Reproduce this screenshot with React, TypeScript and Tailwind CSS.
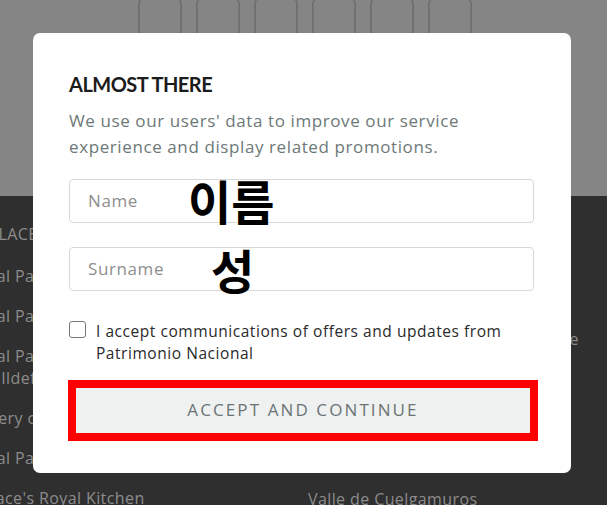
const BODY = "font-['Open_Sans',sans-serif]"

const leftLinks = [
  'Royal Palace of Madrid',
  'Royal Palace of Aranjuez',
]

function Page() {
  return (
    <div className="min-h-[505px] w-[607px] overflow-hidden bg-[#2f2f2f]">
      <div className="h-[196px] bg-[#858585] flex justify-center gap-[14px] pl-[2px]">
        {[0, 1, 2, 3, 4, 5].map(i => (
          <div key={i} className="w-[44px] h-[44px] -mt-[4px] rounded-[8px] border-2 border-[#717171]" />
        ))}
      </div>
      <div className={`flex text-[16px] tracking-[0.4px] text-[#8c8c8c] ${BODY}`}>
        <div className="-ml-[32px] w-[304px] shrink-0 flex flex-col pt-[27px]">
          <div className="tracking-wide leading-[22px] pl-[10px]">PALACES</div>
          <div className="flex flex-col gap-[18px] mt-[20px] leading-[22px]">
            {leftLinks.map(l => (
              <div key={l}>{l}</div>
            ))}
            <div>
              Royal Palace of La Granja de
              <br />
              San Ildefonso
            </div>
            <div>Gallery of Royal Collections</div>
            <div>Royal Palace of El Pardo</div>
            <div className="ml-[4px]">Palace's Royal Kitchen</div>
          </div>
        </div>
        <div className="ml-[36px] flex flex-col pt-[132px] leading-[22px]">
          <div className="whitespace-nowrap tracking-normal">Monastery of San Jerónimo de Yuste</div>
          <div className="mt-[138px] whitespace-nowrap">Valle de Cuelgamuros</div>
        </div>
      </div>
    </div>
  )
}

function Modal() {
  return (
    <div className="fixed inset-0 flex items-center justify-center pr-[3px]">
      <div className={`w-[538px] h-[440px] bg-white rounded-[7px] pl-[36px] pr-[37px] pt-[38px] ${BODY}`}>
        <h2 className="text-[20px] font-bold text-[#1c1c1c] leading-[28px] tracking-[-0.5px] -mt-[1px] font-['Lato',sans-serif]">
          ALMOST THERE
        </h2>
        <p className="mt-[10px] text-[17px] tracking-[0.6px] leading-[26px] text-[#6d7878]">
          We use our users' data to improve our service
          <br />
          experience and display related promotions.
        </p>
        <div className="relative mt-[19px]">
          <input
            placeholder="Name"
            className="w-full h-[44px] border border-[#d8d8d8] rounded-[4px] px-[18px] text-[17px] tracking-[0.6px] placeholder:text-[#8e8e8e] outline-none"
          />
          <span className="absolute left-[119px] top-[-6px] text-[47px] leading-[54px] font-bold text-black font-['Noto_Sans_CJK_KR',sans-serif] pointer-events-none">
            이름
          </span>
        </div>
        <div className="relative mt-[24px]">
          <input
            placeholder="Surname"
            className="w-full h-[44px] border border-[#d8d8d8] rounded-[4px] px-[18px] text-[17px] tracking-[0.6px] placeholder:text-[#8e8e8e] outline-none"
          />
          <span className="absolute left-[142px] top-[-5px] text-[47px] leading-[54px] font-bold text-black font-['Noto_Sans_CJK_KR',sans-serif] pointer-events-none">
            성
          </span>
        </div>
        <label className="mt-[29px] flex items-start gap-[10px] text-[15.5px] tracking-[0.55px] leading-[22px] text-[#2a2a2a]">
          <span className="mt-[1px] w-[17px] h-[17px] shrink-0 rounded-[3px] border border-[#777] bg-white" />
          <span>
            I accept communications of offers and updates from
            <br />
            Patrimonio Nacional
          </span>
        </label>
        <div className="mt-[16px] -ml-[1px] w-[470px] border-[8px] border-[#ff0000]">
          <button
            type="button"
            className="w-full h-[45px] bg-[#eff1f1] text-[17px] tracking-[2.1px] text-[#6a7474]"
          >
            ACCEPT AND CONTINUE
          </button>
        </div>
      </div>
    </div>
  )
}

export default function App() {
  return (
    <div className="relative">
      <Page />
      <Modal />
    </div>
  )
}
